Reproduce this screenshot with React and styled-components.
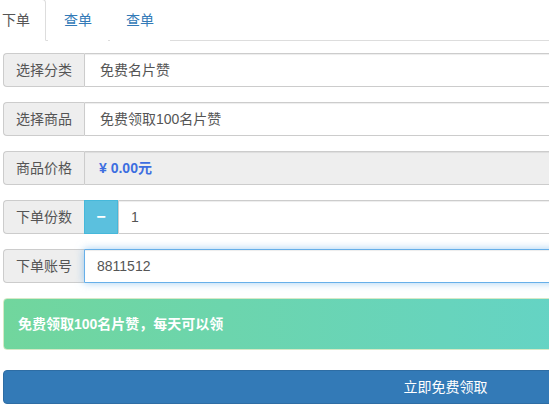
import React from "react";
import styled, { createGlobalStyle } from "styled-components";

const Global = createGlobalStyle`
  html, body { margin: 0; padding: 0; background: #fff; overflow: hidden; }
  body {
    font-family: "Liberation Sans", "Noto Sans CJK SC", sans-serif;
    font-size: 14px;
    line-height: 20px;
    color: #333;
  }
  * { box-sizing: border-box; }
`;

const Page = styled.div`
  width: 900px;
  padding-left: 3px;
`;

const Tabs = styled.ul`
  list-style: none;
  margin: -1px 0 0 -17px;
  padding: 0;
  display: flex;
  border-bottom: 1px solid #ddd;
  width: 910px;
`;

const Tab = styled.li`
  margin-bottom: -1px;
  margin-right: 2px;
  padding: 10px 15px;
  line-height: 20px;
  border: 1px solid ${(p) => (p.$active ? "#ddd" : "transparent")};
  border-bottom-color: transparent;
  border-radius: 4px 4px 0 0;
  background: #fff;
  color: ${(p) => (p.$active ? "#555" : "#337ab7")};
`;

const Form = styled.div`
  width: 885px;
  margin-top: 12px;
`;

const Group = styled.div`
  display: flex;
  height: 34px;
  margin-bottom: 15px;
`;

const Addon = styled.div`
  flex: none;
  width: 81px;
  display: flex;
  align-items: center;
  justify-content: center;
  background: #eee;
  border: 1px solid #ccc;
  border-right: none;
  border-radius: 4px 0 0 4px;
  color: #555;
`;

const Field = styled.div`
  flex: 1;
  display: flex;
  align-items: center;
  padding-left: ${(p) => p.$pad || 12}px;
  border: 1px solid ${(p) => (p.$focus ? "#66afe9" : "#ccc")};
  border-radius: 0 4px 4px 0;
  background: ${(p) => (p.$readonly ? "#eee" : "#fff")};
  color: #555;
  box-shadow: ${(p) =>
    p.$focus
      ? "inset 0 1px 1px rgba(0,0,0,.075), 0 0 8px rgba(102,175,233,.6)"
      : "inset 0 1px 1px rgba(0,0,0,.075)"};
`;

const Price = styled.span`
  color: #3d6ee0;
  font-weight: bold;
`;

const MinusBtn = styled.div`
  flex: none;
  width: 34px;
  display: flex;
  align-items: center;
  justify-content: center;
  background: #5bc0de;
  border: 1px solid #46b8da;
  color: #fff;
  font-weight: bold;
  font-size: 16px;
`;

const Alert = styled.div`
  padding: 15px 14px;
  margin-bottom: 20px;
  border: 1px solid #d6e9c6;
  border-radius: 4px;
  background: linear-gradient(to right, #71d69d, #5dd2dc);
  color: #fff;
  font-weight: bold;
  line-height: 20px;
`;

const Submit = styled.button`
  display: block;
  width: 100%;
  height: 34px;
  padding: 6px 12px;
  font-family: inherit;
  font-size: 14px;
  line-height: 20px;
  color: #fff;
  background: #337ab7;
  border: 1px solid #2e6da4;
  border-radius: 4px;
  text-align: center;
`;

export default function App() {
  return (
    <Page>
      <Global />
      <Tabs>
        <Tab $active>下单</Tab>
        <Tab>查单</Tab>
        <Tab>查单</Tab>
      </Tabs>
      <Form>
        <Group>
          <Addon>选择分类</Addon>
          <Field $pad={15}>免费名片赞</Field>
        </Group>
        <Group>
          <Addon>选择商品</Addon>
          <Field $pad={15}>免费领取100名片赞</Field>
        </Group>
        <Group>
          <Addon>商品价格</Addon>
          <Field $readonly $pad={14}>
            <Price>¥ 0.00元</Price>
          </Field>
        </Group>
        <Group>
          <Addon>下单份数</Addon>
          <MinusBtn>−</MinusBtn>
          <Field>1</Field>
        </Group>
        <Group>
          <Addon>下单账号</Addon>
          <Field $focus>8811512</Field>
        </Group>
        <Alert>免费领取100名片赞，每天可以领</Alert>
        <Submit>立即免费领取</Submit>
      </Form>
    </Page>
  );
}
